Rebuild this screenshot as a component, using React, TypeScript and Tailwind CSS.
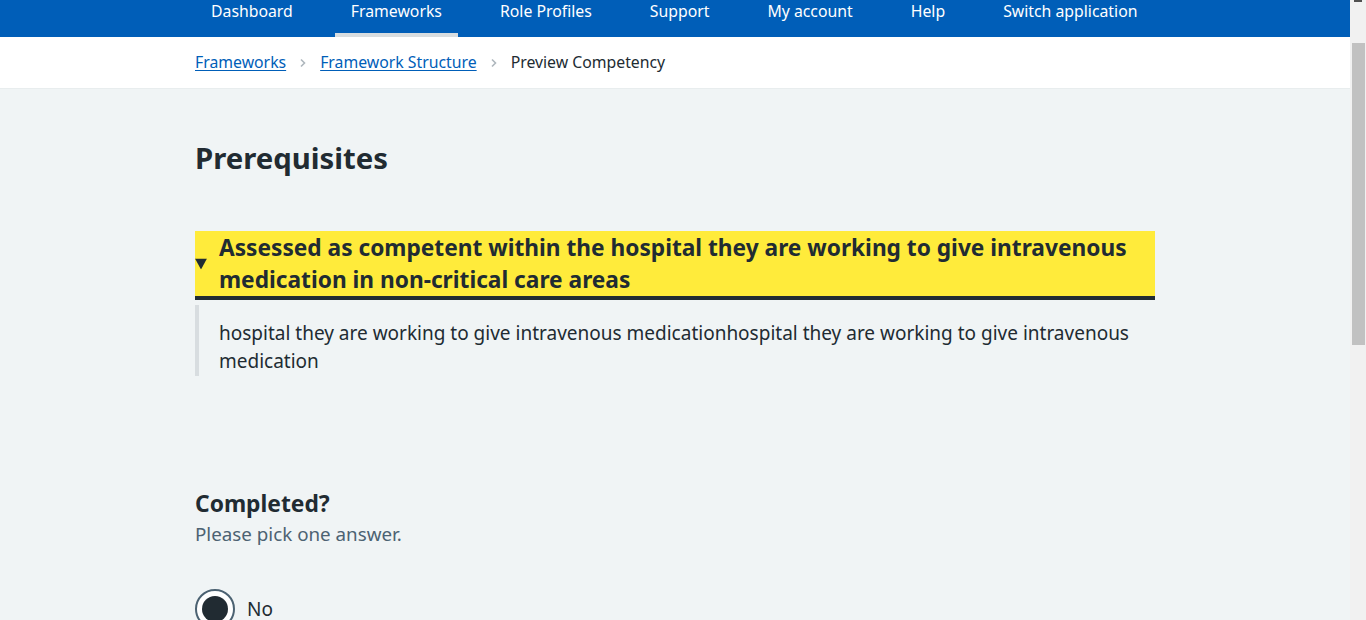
import React from "react";

const navItems = [
  "Dashboard",
  "Frameworks",
  "Role Profiles",
  "Support",
  "My account",
  "Help",
  "Switch application",
];

const Chevron = () => (
  <svg width="16" height="16" viewBox="0 0 16 16" className="mx-[9px] shrink-0" aria-hidden="true">
    <path d="M6 4.5 L9.5 8 L6 11.5" fill="none" stroke="#aeb7bd" strokeWidth="1.6" />
  </svg>
);

const App = () => {
  return (
    <div className="flex h-[620px] w-full overflow-hidden bg-[#f0f4f5] font-['Noto_Sans',Arial,sans-serif] text-[#212b32]">
      <div className="flex-1 min-w-0">
        {/* Navigation */}
        <nav className="h-[37px] bg-[#005eb8]">
          <ul className="mx-auto flex w-[960px] gap-[26px]">
            {navItems.map((item) => (
              <li
                key={item}
                className={
                  "h-[37px] whitespace-nowrap px-4 text-[15.8px] leading-[22px] text-white " +
                  (item === "Frameworks" ? "border-b-4 border-[#d8dde0]" : "")
                }
              >
                {item}
              </li>
            ))}
          </ul>
        </nav>

        {/* Breadcrumb */}
        <div className="h-[52px] border-b border-[#e8edee] bg-white">
          <ol className="mx-auto flex h-full w-[960px] items-center text-[15.8px]">
            <li className="flex items-center">
              <a href="#" className="text-[#005eb8] underline underline-offset-2">
                Frameworks
              </a>
              <Chevron />
            </li>
            <li className="flex items-center">
              <a href="#" className="text-[#005eb8] underline underline-offset-2">
                Framework Structure
              </a>
              <Chevron />
            </li>
            <li className="text-[#212b32]">Preview Competency</li>
          </ol>
        </div>

        {/* Content */}
        <main className="mx-auto w-[960px] pt-[49px]">
          <h1 className="text-[29.3px] font-bold leading-[40px]">Prerequisites</h1>

          <div className="mt-[53px]">
            <div className="relative border-b-4 border-[#212b32] bg-[#ffeb3b] pl-6 pt-[1px]">
              <svg
                width="12"
                height="11"
                viewBox="0 0 12 11"
                className="absolute left-0 top-1/2 -translate-y-1/2"
                aria-hidden="true"
              >
                <path d="M0 0 H12 L6 11 Z" fill="#212b32" />
              </svg>
              <h2 className="text-[22.7px] font-bold leading-[32px]">
                Assessed as competent within the hospital they are working to give intravenous medication in
                non-critical care areas
              </h2>
            </div>
            <div className="mt-[5px] border-l-4 border-[#d8dde0] pb-px pl-5 pt-[14px]">
              <p className="text-[19px] leading-[28px]">
                hospital they are working to give intravenous medicationhospital they are working to give intravenous
                medication
              </p>
            </div>
          </div>

          <fieldset className="mt-[112px]">
            <legend className="text-[22.8px] font-bold leading-[32px]">Completed?</legend>
            <p className="text-[18.8px] leading-[28px] text-[#4c6272]">Please pick one answer.</p>
            <div className="mt-[41px] flex items-center gap-3">
              <span className="flex h-10 w-10 items-center justify-center rounded-full border-2 border-[#4c6272] bg-white">
                <span className="h-[26px] w-[26px] rounded-full bg-[#212b32]" />
              </span>
              <span className="text-[19px] leading-[28px]">No</span>
            </div>
          </fieldset>
        </main>
      </div>

      {/* Scrollbar */}
      <div className="flex w-4 shrink-0 flex-col items-center bg-[#f1f1f1]">
        <div className="h-[2px] w-2 bg-[#505050]" />
        <div className="mt-[41px] h-[302px] w-[13px] bg-[#c1c1c1]" />
      </div>
    </div>
  );
};

export default App;
